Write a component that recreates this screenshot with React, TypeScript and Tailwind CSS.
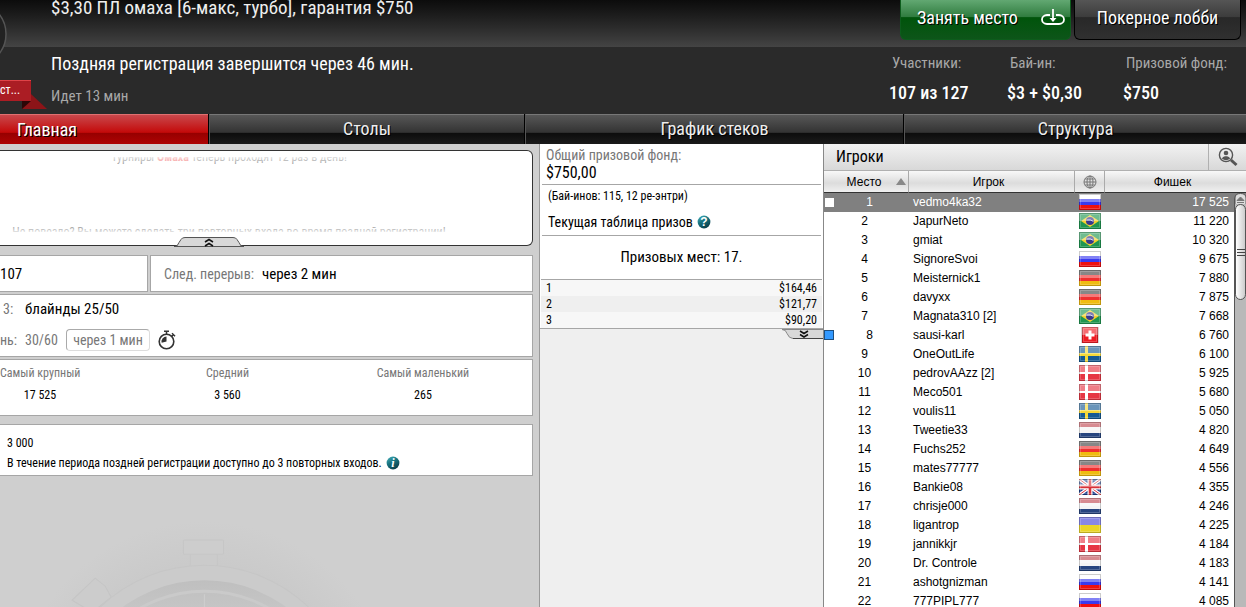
import React from "react";

type Country = "ru" | "br" | "de" | "ch" | "se" | "dk" | "nl" | "gb" | "ua";

interface Player {
  place: number;
  name: string;
  country: Country;
  chips: string;
}

const players: Player[] = [
  { place: 1, name: "vedmo4ka32", country: "ru", chips: "17 525" },
  { place: 2, name: "JapurNeto", country: "br", chips: "11 220" },
  { place: 3, name: "gmiat", country: "br", chips: "10 320" },
  { place: 4, name: "SignoreSvoi", country: "ru", chips: "9 675" },
  { place: 5, name: "Meisternick1", country: "de", chips: "7 880" },
  { place: 6, name: "davyxx", country: "de", chips: "7 875" },
  { place: 7, name: "Magnata310 [2]", country: "br", chips: "7 668" },
  { place: 8, name: "sausi-karl", country: "ch", chips: "6 760" },
  { place: 9, name: "OneOutLife", country: "se", chips: "6 100" },
  { place: 10, name: "pedrovAAzz [2]", country: "dk", chips: "5 925" },
  { place: 11, name: "Meco501", country: "dk", chips: "5 680" },
  { place: 12, name: "voulis11", country: "se", chips: "5 050" },
  { place: 13, name: "Tweetie33", country: "nl", chips: "4 820" },
  { place: 14, name: "Fuchs252", country: "de", chips: "4 649" },
  { place: 15, name: "mates77777", country: "de", chips: "4 556" },
  { place: 16, name: "Bankie08", country: "gb", chips: "4 355" },
  { place: 17, name: "chrisje000", country: "nl", chips: "4 246" },
  { place: 18, name: "ligantrop", country: "ua", chips: "4 225" },
  { place: 19, name: "jannikkjr", country: "dk", chips: "4 184" },
  { place: 20, name: "Dr. Controle", country: "nl", chips: "4 183" },
  { place: 21, name: "ashotgnizman", country: "ru", chips: "4 141" },
  { place: 22, name: "777PIPL777", country: "ru", chips: "4 085" },
];

const prizes = [
  { place: 1, amount: "$164,46" },
  { place: 2, amount: "$121,77" },
  { place: 3, amount: "$90,20" },
];

const stats = [
  { label: "Участники:", value: "107 из 127", width: "w-[118px]" },
  { label: "Бай-ин:", value: "$3 + $0,30", width: "w-[116px]" },
  { label: "Призовой фонд:", value: "$750", width: "w-[123px]" },
];

const stripes: Partial<Record<Country, string[]>> = {
  ru: ["#ffffff", "#3a3af0", "#f01010"],
  de: ["#444444", "#f03030", "#f0bc10"],
  nl: ["#c04a54", "#f4f4f4", "#27457f"],
};

function FlagBody({ country }: { country: Country }) {
  const bands = stripes[country];
  if (bands) {
    return (
      <>
        <rect width="22" height="6" fill={bands[0]} />
        <rect y="5" width="22" height="6" fill={bands[1]} />
        <rect y="11" width="22" height="5" fill={bands[2]} />
      </>
    );
  }
  switch (country) {
    case "br":
      return (
        <>
          <rect width="22" height="16" fill="#1f9650" />
          <path d="M11 2 20 8 11 14 2 8Z" fill="#f2d030" />
          <circle cx="11" cy="8" r="4" fill="#38388c" />
          <path d="M7.5 7q4-1 7 1.5" stroke="#c8c8e8" fill="none" />
        </>
      );
    case "ch":
      return (
        <>
          <rect x="2" width="18" height="16" fill="#d8d8d8" />
          <rect x="3" width="16" height="16" fill="#ee1c24" />
          <path d="M9.5 3.5h3v3h3v3h-3v3h-3v-3h-3v-3h3z" fill="#fff" />
        </>
      );
    case "se":
      return (
        <>
          <rect width="22" height="16" fill="#155a94" />
          <path d="M6 0h3v16H6zM0 7h22v3H0z" fill="#f5d838" />
        </>
      );
    case "dk":
      return (
        <>
          <rect width="22" height="16" fill="#e63644" />
          <path d="M6 0h3v16H6zM0 7h22v2H0z" fill="#fff" />
        </>
      );
    case "gb":
      return (
        <>
          <rect width="22" height="16" fill="#1c3f8c" />
          <path d="M0 0 22 16M22 0 0 16" stroke="#fff" strokeWidth="3.4" />
          <path d="M0 0 22 16M22 0 0 16" stroke="#d83038" strokeWidth="1" />
          <path d="M11 0v16M0 8h22" stroke="#fff" strokeWidth="5" />
          <path d="M11 0v16M0 8h22" stroke="#d83038" strokeWidth="2.6" />
        </>
      );
    default:
      return (
        <>
          <rect width="22" height="8" fill="#4646d8" />
          <rect y="8" width="22" height="8" fill="#ead628" />
        </>
      );
  }
}

function Flag({ country }: { country: Country }) {
  const x = country === "ch" ? 3 : 0;
  const w = country === "ch" ? 16 : 22;
  return (
    <svg className="mx-auto block h-4 w-[22px]" viewBox="0 0 22 16" role="img" aria-label={country}>
      <FlagBody country={country} />
      <rect x={x} width={w} height="8" fill="#fff" opacity="0.36" />
      <rect x={x + 1.5} y="1.5" width={w - 3} height="13" fill="none" stroke="#fff" opacity="0.2" />
      <rect x={x + 0.5} y="0.5" width={w - 1} height="15" fill="none" stroke="#000" opacity="0.2" />
    </svg>
  );
}

function RoundBadge({ glyph, italic }: { glyph: string; italic?: boolean }) {
  return (
    <svg className="h-3.5 w-3.5 shrink-0" viewBox="0 0 14 14">
      <defs>
        <linearGradient id={`badge-${italic ? "i" : "q"}`} x1="0" y1="0" x2="0.6" y2="1">
          <stop offset="0" stopColor="#49b4bd" />
          <stop offset="0.5" stopColor="#17727f" />
          <stop offset="1" stopColor="#0a3e4a" />
        </linearGradient>
      </defs>
      <circle cx="7" cy="7" r="6.4" fill={`url(#badge-${italic ? "i" : "q"})`} />
      <text
        x="7"
        y="11"
        textAnchor="middle"
        fill="#fff"
        fontSize="12"
        fontWeight="bold"
        fontStyle={italic ? "italic" : "normal"}
        fontFamily={italic ? "Liberation Serif, serif" : "Liberation Sans, sans-serif"}
      >
        {glyph}
      </text>
    </svg>
  );
}

function Stopwatch() {
  return (
    <svg className="h-5 w-[18px]" viewBox="0 0 18 20" fill="none" stroke="#333">
      <circle cx="8.5" cy="11.5" r="7.3" strokeWidth="1.6" />
      <path d="M8.5 1v3.5M6 1.2h5M14 3.2l3 3M15.5 4.5l-2 2" strokeWidth="1.5" />
      <path d="M8.5 11.5v-5a5 5 0 0 0-4.8 6.300Z" fill="#333" stroke="none" />
    </svg>
  );
}

function WatchBackdrop() {
  return (
    <svg className="block h-[131px] w-full" viewBox="0 0 532 131" preserveAspectRatio="xMinYMin slice">
      <defs>
        <radialGradient id="halo">
          <stop offset="0.7" stopColor="#b9b9b9" />
          <stop offset="1" stopColor="#b9b9b9" stopOpacity="0" />
        </radialGradient>
        <linearGradient id="face" x1="0" y1="0" x2="0" y2="1">
          <stop offset="0" stopColor="#bfbfbf" />
          <stop offset="0.15" stopColor="#c8c8c8" />
        </linearGradient>
      </defs>
      <circle cx="204" cy="235" r="190" fill="url(#halo)" opacity="0.3" />
      <rect x="190" y="77" width="27" height="14" fill="#cbcbcb" stroke="#c6c6c6" />
      <rect x="183" y="64" width="40" height="14" rx="1" fill="#cdcdcd" stroke="#c6c6c6" />
      <path d="M72 124 95 102 105 110 111 121 92 136Z" fill="#cccccc" stroke="#c5c5c5" />
      <circle cx="204" cy="239" r="150" fill="#cbcbcb" stroke="#c6c6c6" />
      <circle cx="204" cy="241" r="137" fill="url(#face)" />
      <circle cx="204" cy="245" r="130" fill="none" stroke="#cacaca" strokeWidth="3" />
      <path d="M204 118v13" stroke="#cfcfcf" />
    </svg>
  );
}

function Header() {
  return (
    <header className="relative bg-[#2a2a2a] text-white">
      <div className="flex h-[47px] items-start justify-between bg-linear-to-b from-[#0c0c0c] to-[#444] pr-[5px] pl-[51px]">
        <h1 className="text-[19px] leading-4 text-[#eee]">$3,30 ПЛ омаха [6-макс, турбо], гарантия $750</h1>
        <div className="flex gap-[3px]">
          <button className="flex h-10 w-[171px] items-center justify-between rounded-b-md border border-t-0 border-[#0d5c1c] bg-[linear-gradient(#62a872_0%,#2f7b3e_44%,#00540b_45%,#0d5519_100%)] px-[5px] pb-1 pl-4 text-lg leading-6 text-shadow-[1px_1px_0_#000]">
            Занять место
            <svg className="h-5 w-6" viewBox="0 0 24 20" fill="none" stroke="#fff" strokeWidth="1.8">
              <path d="M9 7H6a5 4.500 0 0 0 0 9h12a5 4.500 0 0 0 0-9h-3M12 1v11" />
              <path d="M8.500 10h7L12 14z" fill="#fff" stroke="none" />
            </svg>
          </button>
          <button className="h-10 w-[167px] rounded-b-md border border-t-0 border-black bg-[linear-gradient(#555_0%,#3c3c3c_44%,#282828_45%,#303030_100%)] pb-1 text-lg leading-6 text-shadow-[1px_1px_0_#000]">
            Покерное лобби
          </button>
        </div>
      </div>
      <div className="flex h-[67px] justify-between pl-[51px]">
        <div className="pt-[5px]">
          <p className="text-lg leading-6">Поздняя регистрация завершится через 46 мин.</p>
          <p className="pt-2 text-[15px] leading-6 text-[#a8a8a8]">Идет 13 мин</p>
        </div>
        <dl className="flex pt-1.5">
          {stats.map((stat) => (
            <div key={stat.label} className={stat.width}>
              <dt className="pl-[3px] text-[15px] leading-5 text-[#a8a8a8]">{stat.label}</dt>
              <dd className="pt-2 text-lg leading-6 font-medium">{stat.value}</dd>
            </div>
          ))}
        </dl>
      </div>
      <svg className="absolute top-0 left-0 h-[68px] w-2" viewBox="0 0 8 68" fill="none">
        <circle cx="-26" cy="34" r="32" fill="#222" stroke="#555" strokeWidth="1.5" />
      </svg>
      <div className="absolute top-20 left-0">
        <svg className="absolute top-0 left-0 h-[29px] w-12" viewBox="0 0 48 29">
          <path d="M31 14 47 29H22V21Z" fill="#8c1418" />
          <path d="M22 21h9l-9 8z" fill="#2c0607" />
        </svg>
        <div className="relative h-[21px] w-[31px] border-t border-[#e04348] bg-[#ab1d24] text-xs leading-[18px]">ст...</div>
      </div>
    </header>
  );
}

const tabClass =
  "border-t border-l border-t-[#777] border-l-[#555] bg-[linear-gradient(#575757_0%,#333_58%,#0c0c0c_60%,#1c1c1c_100%)] text-center text-lg leading-7 text-[#eee] text-shadow-[1px_1px_0_#000]";

function Tabs() {
  return (
    <nav className="grid h-[30px] grid-cols-[208fr_315fr_378fr_342fr] gap-px bg-black">
      <a
        href="#main"
        className="border-t border-[#e07070] bg-[linear-gradient(#c9484c_0%,#c40a0a_58%,#960000_60%,#b00404_100%)] pl-[17px] text-lg leading-[30px] text-white text-shadow-[1px_1px_0_#000]"
      >
        Главная
      </a>
      <a href="#tables" className={tabClass}>
        Столы
      </a>
      <a href="#stacks" className={tabClass}>
        График стеков
      </a>
      <a href="#structure" className={tabClass}>
        Структура
      </a>
    </nav>
  );
}

function Announcement() {
  return (
    <div className="relative h-24 rounded-r-md border border-l-0 border-[#333] bg-white pt-1.5 pr-[74px]">
      <div className="relative flex h-[75px] flex-col justify-between overflow-hidden text-center text-xs whitespace-nowrap text-[#777]">
        <p className="-mt-2 leading-4">
          Турниры <b className="text-[#f06060]">Омаха</b> теперь проходят 12 раз в день!
        </p>
        <p className="-mb-2 leading-4">
          Не повезло? Вы можете сделать три повторных входа во время поздней регистрации!
        </p>
        <div className="absolute inset-x-0 top-0 h-2 bg-linear-to-b from-white/80 to-white/20" />
        <div className="absolute inset-x-0 bottom-0 h-2 bg-linear-to-t from-white/80 to-white/10" />
      </div>
      <button aria-label="Свернуть" className="absolute -bottom-[3px] left-[174px] block">
        <svg className="block h-3 w-[70px]" viewBox="0 0 70 12">
          <path d="M0 10.500q4 0 5-4l2-3Q8 1.500 11 1.500h48q3 0 4 2l2 3q1 4 5 4Z" fill="#d8d8d8" stroke="#555" />
          <path d="M31 6l4-2.500 4 2.500M31 10l4-2.500 4 2.500" fill="none" stroke="#111" strokeWidth="1.5" />
        </svg>
      </button>
    </div>
  );
}

function Overview() {
  return (
    <section className="flex min-w-0 flex-col bg-[#cfcfcf] pt-1.5 pr-1.5">
      <Announcement />
      <div className="mt-[9px] flex gap-0.5 text-[15px] leading-[36px]">
        <div className="h-[37px] w-[148px] border border-l-0 border-[#a6a6a6] bg-white">107</div>
        <div className="flex h-[37px] flex-1 gap-2 border border-[#a6a6a6] bg-white pl-[13px]">
          <span className="text-sm leading-[36px] text-[#777]">След. перерыв:</span>
          <span>через 2 мин</span>
        </div>
      </div>
      <div className="mt-0.5 h-[63px] border border-l-0 border-[#a6a6a6] bg-white pt-1">
        <div className="flex h-5 items-center text-[15px]">
          <span className="w-[25px] pl-[3px] text-sm text-[#777]">3:</span>
          <span>блайнды 25/50</span>
        </div>
        <div className="flex h-[22px] items-center pt-5 text-sm leading-5 text-[#777]">
          <span className="w-[25px]">нь:</span>
          <span className="w-[41px]">30/60</span>
          <span className="mr-2 w-[84px] rounded border border-[#ddd] border-t-[#aaa] border-l-[#aaa] text-center">
            через 1 мин
          </span>
          <Stopwatch />
        </div>
      </div>
      <dl className="mt-0.5 flex h-[57px] border border-l-0 border-[#a6a6a6] bg-white pt-1 text-center text-xs whitespace-nowrap">
        <div className="w-20">
          <dt className="leading-[18px] text-[#777]">Самый крупный</dt>
          <dd className="pt-1 leading-[18px]">17 525</dd>
        </div>
        <div className="flex-1">
          <dt className="leading-[18px] text-[#777]">Средний</dt>
          <dd className="pt-1 leading-[18px]">3 560</dd>
        </div>
        <div className="mr-[61px] w-24">
          <dt className="leading-[18px] text-[#777]">Самый маленький</dt>
          <dd className="pt-1 leading-[18px]">265</dd>
        </div>
      </dl>
      <div className="mt-2 h-[52px] border border-l-0 border-[#a6a6a6] bg-white pt-2 pl-[7px] text-xs leading-5">
        <p>3 000</p>
        <p className="flex items-center gap-1 whitespace-nowrap">
          В течение периода поздней регистрации доступно до 3 повторных входов.
          <RoundBadge glyph="i" italic />
        </p>
      </div>
      <div className="min-h-0 flex-1 overflow-hidden">
        <WatchBackdrop />
      </div>
    </section>
  );
}

function Prizes() {
  return (
    <section className="min-w-0 border-l border-[#999] bg-[#efefef]">
      <div className="border-b border-[#a6a6a6] bg-white">
        <div className="mx-0.5 border-b border-[#a6a6a6] pt-[3px] pb-[3px] pl-1 text-base leading-[17px]">
          <p className="text-sm leading-[17px] text-[#777]">Общий призовой фонд:</p>
          <p>$750,00</p>
        </div>
        <div className="mx-0.5 h-[51px] border-b border-[#a6a6a6] pt-[3px] pl-1.5">
          <p className="text-xs leading-4">(Бай-инов: 115, 12 ре-энтри)</p>
          <p className="flex items-center gap-1 pt-2 text-sm leading-5">
            Текущая таблица призов <RoundBadge glyph="?" />
          </p>
        </div>
        <p className="mx-px border-b border-[#a6a6a6] text-center text-[15px] leading-[43px]">Призовых мест: 17.</p>
        <table className="mx-px w-[calc(100%-2px)] text-xs">
          <tbody>
            {prizes.map((prize) => (
              <tr key={prize.place} className="h-4 bg-[#f7f7f7] even:bg-[#efefef]">
                <td className="p-0 pl-[5px] leading-4">{prize.place}</td>
                <td className="p-0 pr-[5px] text-right leading-4">{prize.amount}</td>
              </tr>
            ))}
          </tbody>
        </table>
      </div>
      <div className="flex justify-end">
        <button aria-label="Развернуть">
          <svg className="block h-3 w-[41px]" viewBox="0 0 41 12">
            <path d="M0 .5q4 0 5 4 2 5 6 5h31V.5Z" fill="#d8d8d8" stroke="#888" />
            <path d="M11 9.500h30" stroke="#444" />
            <path d="M18 2l4 2.500L26 2M18 5.500l4 2.500 4-2.500" fill="none" stroke="#111" strokeWidth="1.5" />
          </svg>
        </button>
      </div>
    </section>
  );
}

function SearchPlayerIcon() {
  return (
    <svg className="h-5 w-5" viewBox="0 0 20 20" fill="none" stroke="#555">
      <circle cx="8" cy="8" r="6.6" strokeWidth="1.4" />
      <path d="m13 13 5.500 5" strokeWidth="3" />
      <circle cx="8" cy="6" r="2.3" fill="#555" stroke="none" />
      <path d="M3.800 11.500q1-2 3.200-2.300h2q2.200.3 3.200 2.300-4.200 3.300-8.400 0Z" fill="#555" stroke="none" />
    </svg>
  );
}

function Globe() {
  return (
    <svg className="mx-auto block h-3.5 w-3.5" viewBox="0 0 14 14" fill="none" stroke="#777">
      <circle cx="7" cy="7" r="6" />
      <ellipse cx="7" cy="7" rx="3" ry="6" />
      <path d="M1 7h12M7 1v12M2 4h10M2 10h10" />
    </svg>
  );
}

function Scrollbar() {
  return (
    <div className="absolute top-[22px] right-0 bottom-0 w-3 rounded-t-md border-l border-[#555] bg-[#b9b9b9]">
      <svg className="block h-[11px] w-[11px]" viewBox="0 0 11 11">
        <path d="M0 11V5q0-4.500 5.500-4.500T11 5v6" fill="#ddd" stroke="#555" />
        <path d="M2 7.500 5.500 4 9 7.500zM2 9.500h7" fill="#777" stroke="#777" />
      </svg>
      <div className="flex h-24 flex-col items-center justify-center gap-0.5 rounded-full border border-[#555] bg-linear-to-r from-white to-[#ccc]">
        <span className="h-px w-2 bg-[#444]" />
        <span className="h-px w-2 bg-[#444]" />
        <span className="h-px w-2 bg-[#444]" />
      </div>
    </div>
  );
}

function PlayersTable() {
  return (
    <section className="flex min-h-0 min-w-0 flex-col border-l border-[#888] bg-white">
      <div className="flex h-[27px] shrink-0 items-center border-b border-[#b0b0b0] bg-linear-to-b from-[#f2f2f2] to-[#d8d8d8]">
        <h2 className="flex-1 pl-3 text-base">Игроки</h2>
        <button aria-label="Найти игрока" className="flex h-full w-[38px] items-center justify-center border-l border-[#b0b0b0]">
          <SearchPlayerIcon />
        </button>
      </div>
      <div className="relative min-h-0 flex-1 overflow-hidden font-['Liberation_Sans',sans-serif] text-xs">
        <table className="w-full table-fixed border-separate border-spacing-0">
          <thead>
            <tr className="h-[22px] bg-[linear-gradient(#f8f8f8_0%,#dcdcdc_55%,#f2f2f2_100%)]">
              <th className="w-[85px] border-r border-b border-r-[#aaa] border-b-[#333] p-0 font-normal">
                <div className="flex items-center">
                  <span className="flex-1 pl-2">Место</span>
                  <svg className="mr-0.5 h-[7px] w-2.5" viewBox="0 0 10 7">
                    <path d="M0 7 5 0l5 7z" fill="#888" />
                  </svg>
                </div>
              </th>
              <th className="border-r border-b border-r-[#aaa] border-b-[#333] p-0 pr-1.5 font-normal">Игрок</th>
              <th className="w-[30px] border-r border-b border-r-[#aaa] border-b-[#333] p-0 font-normal" aria-label="Страна">
                <Globe />
              </th>
              <th className="w-[141px] border-b border-b-[#333] p-0 pr-1.5 font-normal">Фишек</th>
            </tr>
          </thead>
          <tbody>
            {players.map((player) => (
              <tr
                key={player.place}
                className={player.place === 1 ? "h-[19px] bg-[#808080] leading-[18px] text-white" : "h-[19px] leading-[18px]"}
              >
                <td className="p-0 align-top">
                  <div className="flex items-center">
                    {player.place === 1 && <span className="ml-px h-[9px] w-[9px] bg-white" />}
                    {player.place === 8 && <span className="h-2.5 w-2.5 border border-[#1d4f80] bg-[#3399ff]" />}
                    <span className="flex-1 pr-1 text-center">{player.place}</span>
                  </div>
                </td>
                <td className="p-0 pl-1 align-top">{player.name}</td>
                <td className="p-0 pt-px align-top">
                  <Flag country={player.country} />
                </td>
                <td className="p-0 pr-[17px] text-right align-top">{player.chips}</td>
              </tr>
            ))}
          </tbody>
        </table>
        <Scrollbar />
      </div>
    </section>
  );
}

export default function App() {
  return (
    <div className="flex h-screen flex-col overflow-hidden font-['Liberation_Sans_Narrow','Roboto_Condensed',Roboto,sans-serif] text-black">
      <Header />
      <Tabs />
      <main className="grid min-h-0 flex-1 grid-cols-[539fr_284fr_423fr]">
        <Overview />
        <Prizes />
        <PlayersTable />
      </main>
    </div>
  );
}
